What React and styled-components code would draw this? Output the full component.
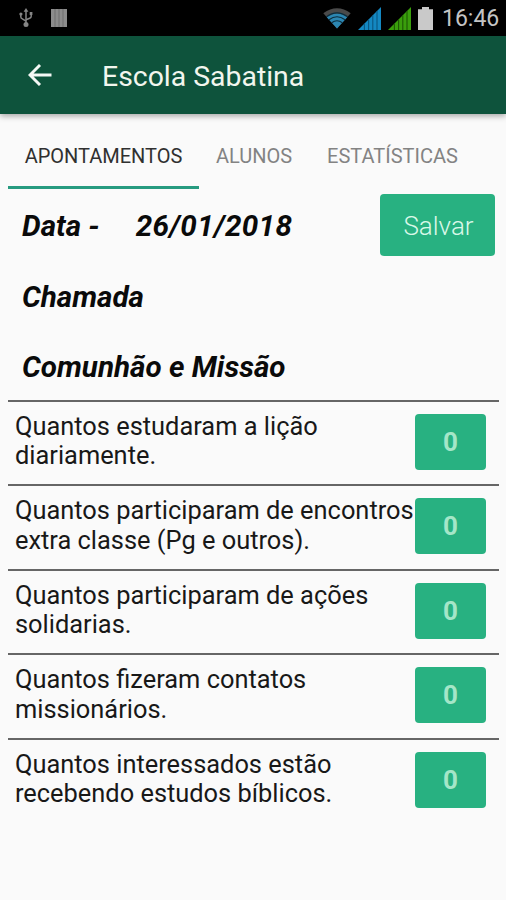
import React, { useState } from "react";
import styled, { createGlobalStyle } from "styled-components";

const questions = [
  { id: 1, lines: ["Quantos estudaram a lição", "diariamente."], count: 0 },
  {
    id: 2,
    lines: ["Quantos participaram de encontros", "extra classe (Pg e outros)."],
    count: 0,
  },
  { id: 3, lines: ["Quantos participaram de ações", "solidarias."], count: 0 },
  { id: 4, lines: ["Quantos fizeram contatos", "missionários."], count: 0 },
  {
    id: 5,
    lines: ["Quantos interessados estão", "recebendo estudos bíblicos."],
    count: 0,
  },
];

const tabs = [
  { name: "APONTAMENTOS", width: 191 },
  { name: "ALUNOS", width: 110 },
  { name: "ESTATÍSTICAS", width: 167 },
];

function UsbIcon() {
  return (
    <svg width="14" height="20" viewBox="0 0 14 20">
      <g fill="none" stroke="#858585" strokeWidth="1.5">
        <path d="M7 3v13" />
        <path d="M1.8 6.5v2.2q0 1.6 1.6 2.2L7 13.2" />
        <path d="M12.2 5.5v2.7q0 1.4-1.5 2L7 11.8" />
      </g>
      <g fill="#858585">
        <path d="M7 0l2.4 3.8H4.6z" />
        <circle cx="7" cy="16.6" r="2.5" />
        <circle cx="1.9" cy="6" r="1.6" />
        <rect x="10.7" y="4" width="2.7" height="3" />
      </g>
    </svg>
  );
}

function BarcodeIcon() {
  return (
    <svg width="16" height="18" viewBox="0 0 16 18">
      <rect width="16" height="18" fill="#8c8c8c" />
      <path d="M4 0v18M8 0v18M12 0v18" stroke="#6c6c6c" strokeWidth="0.9" />
    </svg>
  );
}

function WifiIcon() {
  return (
    <svg width="28" height="21" viewBox="0 0 28 21">
      <path d="M14 20.5L0.3 5.2Q14-4.6 27.7 5.2z" fill="#4a4a4a" />
      <path d="M14 20.5L3.8 9.2Q14 1.6 24.2 9.2z" fill="#2b86b2" />
      <g fill="none" stroke="#0b2c3d" strokeWidth="1.1">
        <path d="M3.4 8.8Q14 1 24.6 8.8" />
        <path d="M6 11.8Q14 5.8 22 11.8" />
        <path d="M8.7 14.8Q14 10.6 19.3 14.8" />
      </g>
    </svg>
  );
}

function SignalIcon({ color, gap }) {
  return (
    <svg width="23" height="23" viewBox="0 0 23 23">
      <path d="M0 23L23 0v23z" fill={color} />
      <path
        d="M6.4 16.6v6.4M10.6 12.4v10.6M14.8 8.2v14.8M19 4v19"
        stroke={gap}
        strokeWidth="1.1"
      />
    </svg>
  );
}

function BatteryIcon() {
  return (
    <svg width="15" height="23" viewBox="0 0 15 23">
      <path d="M4 0h7v2.2h4V23H0V2.2h4z" fill="#c9c9c9" />
    </svg>
  );
}

function BackIcon() {
  return (
    <svg width="24" height="22" viewBox="0 0 24 22">
      <path
        d="M23.5 11H2.5M12 1L2 11l10 10"
        fill="none"
        stroke="#f4f8f5"
        strokeWidth="2.9"
      />
    </svg>
  );
}

function App() {
  const [active, setActive] = useState("APONTAMENTOS");

  return (
    <StScreen>
      <GlobalStyle />
      <StStatusBar>
        <StNotices>
          <UsbIcon />
          <BarcodeIcon />
        </StNotices>
        <StSystemIcons>
          <WifiIcon />
          <SignalIcon color="#1488c2" gap="#0a5680" />
          <SignalIcon color="#3a9f0c" gap="#1d5805" />
          <BatteryIcon />
          <StClock>16:46</StClock>
        </StSystemIcons>
      </StStatusBar>

      <StAppBar>
        <StBackBtn aria-label="Voltar">
          <BackIcon />
        </StBackBtn>
        <StTitle>Escola Sabatina</StTitle>
      </StAppBar>

      <StTabs>
        {tabs.map((tab) => (
          <StTab
            key={tab.name}
            $width={tab.width}
            $active={tab.name === active}
            onClick={() => setActive(tab.name)}
          >
            {tab.name}
          </StTab>
        ))}
      </StTabs>

      <StDateRow>
        <StHeading>Data -</StHeading>
        <StDate $spacing="0.35px">26/01/2018</StDate>
        <StSaveBtn>Salvar</StSaveBtn>
      </StDateRow>
      <StSection $height={70}>
        <StHeading>Chamada</StHeading>
      </StSection>
      <StSection $height={69}>
        <StHeading>Comunhão e Missão</StHeading>
      </StSection>

      <StList>
        {questions.map((question) => (
          <StRow key={question.id}>
            <StQuestion>
              {question.lines.map((line) => (
                <StLine key={line}>{line}</StLine>
              ))}
            </StQuestion>
            <StCountBtn>{question.count}</StCountBtn>
          </StRow>
        ))}
      </StList>
    </StScreen>
  );
}

export default App;

const GlobalStyle = createGlobalStyle`
  * {
    box-sizing: border-box;
  }
  body {
    margin: 0;
    background-color: #fafafa;
    font-family: Roboto, sans-serif;
  }
  button {
    border: 0;
    padding: 0;
    background: none;
    font-family: inherit;
    cursor: pointer;
  }
  svg {
    display: block;
  }
`;

const StScreen = styled.div`
  height: 900px;
  background-color: #fafafa;
  overflow: hidden;
`;

const StStatusBar = styled.div`
  display: flex;
  justify-content: space-between;
  height: 36px;
  padding: 0 8px 0 19px;
  background-color: #000;
`;

const StNotices = styled.div`
  display: flex;
  align-items: center;
  gap: 18px;
`;

const StSystemIcons = styled.div`
  display: flex;
  align-items: center;
  gap: 7px;
`;

const StClock = styled.span`
  width: 56px;
  margin-left: 2px;
  padding-top: 1px;
  color: #c4c4c4;
  font-size: 23px;
  line-height: 36px;
  white-space: nowrap;
`;

const StAppBar = styled.header`
  display: flex;
  align-items: center;
  height: 78px;
  padding-left: 28px;
  background-color: #0e533c;
  box-shadow: 0 2px 6px rgba(0, 0, 0, 0.35);
`;

const StBackBtn = styled.button`
  width: 74px;
`;

const StTitle = styled.h1`
  margin: 0;
  padding-top: 4px;
  color: #f2f6ee;
  font-size: 28.4px;
  font-weight: 400;
  line-height: 36px;
  white-space: nowrap;
`;

const StTabs = styled.nav`
  display: flex;
  height: 75px;
  padding: 0 8px;
`;

const StTab = styled.button`
  width: ${({ $width }) => $width}px;
  padding-top: 12px;
  border-bottom: 3px solid
    ${({ $active }) => ($active ? "#279b80" : "transparent")};
  color: ${({ $active }) => ($active ? "#303030" : "#838383")};
  font-size: 20px;
  white-space: nowrap;
`;

const StDateRow = styled.div`
  display: flex;
  align-items: center;
  height: 72px;
  padding: 0 11px 0 22px;
`;

const StHeading = styled.h2`
  margin: 0;
  padding-top: 2px;
  color: #0a0a0a;
  font-size: 29.6px;
  font-style: italic;
  font-weight: 700;
  letter-spacing: ${({ $spacing }) => $spacing || "0"};
  line-height: 34px;
  white-space: nowrap;
`;

const StDate = styled(StHeading)`
  margin-left: 36px;
`;

const StSaveBtn = styled.button`
  width: 115px;
  height: 62px;
  margin-left: auto;
  padding: 2px 0 0 2px;
  border-radius: 4px;
  background-color: #28b181;
  color: #d8f8e8;
  font-size: 26px;
  font-weight: 300;
`;

const StSection = styled.section`
  display: flex;
  align-items: center;
  height: ${({ $height }) => $height}px;
  padding-left: 22px;
`;

const StList = styled.ul`
  margin: 0;
  padding: 0 7px 0 8px;
  list-style: none;
`;

const StRow = styled.li`
  display: flex;
  justify-content: space-between;
  height: 84.4px;
  padding: 9px 13px 0 7px;
  border-top: 2px solid #666;
`;

const StQuestion = styled.p`
  width: 400px;
  margin: 0;
  padding-top: 1px;
  color: #181818;
  font-size: 25.4px;
  line-height: 29.4px;
  white-space: nowrap;
`;

const StLine = styled.span`
  display: block;
`;

const StCountBtn = styled.button`
  flex: none;
  width: 71px;
  height: 56px;
  margin-top: 3px;
  border-radius: 4px;
  background-color: #28b181;
  color: #a4e6c8;
  font-size: 26px;
  font-weight: 700;
`;
